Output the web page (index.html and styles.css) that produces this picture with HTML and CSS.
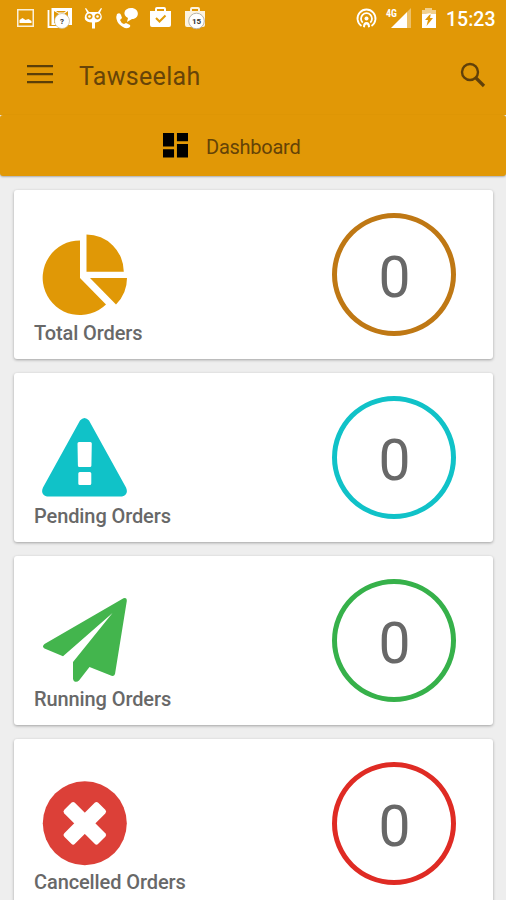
FILE: index.html
```html
<!DOCTYPE html>
<html lang="en">
<head>
<meta charset="utf-8">
<title>Tawseelah</title>
<link rel="stylesheet" href="styles.css">
</head>
<body>
<header class="header">
  <div class="status">
    <svg class="status-icons" viewBox="0 0 210 38" fill="#fff">
      <path fill-rule="evenodd" opacity=".85" d="M17 9h17v18H17zM18.500 10.500v15h14v-15z"/>
      <path d="M19.500 23v-3l3-2 3 2 3-1 3 2v2z"/>
      <path d="M48.500 10v17h13" fill="none" stroke="#fff" stroke-width="1.800"/>
      <path fill-rule="evenodd" d="M51.500 8H72v17H51.500zM54 11v12h14V11l-4 3h-5zM56 11h10l-2 1.500h-6z"/>
      <circle cx="62" cy="21" r="7.500" stroke="#c7b78e" stroke-width=".7"/>
      <text class="badge" x="62" y="24">?</text>
      <path fill-rule="evenodd" d="M86 8l3 4h9l3-4 1 .6-2 4q3 4 1 7-2 3-6 3v6h-3v-6q-5 0-7-3-1-4 2-7l-2-4zM89.500 13.500a3 3 0 1 0 .1 0zM97.500 13.500a3 3 0 1 0 .1 0z"/>
      <circle cx="89.500" cy="16.500" r="1.300"/><circle cx="97.500" cy="16.500" r="1.300"/>
      <path d="M117 14q3-2 4 1l1 3-2 2q1 3 4 4l2-1 4 2q1 2-2 3-4 1-9-4-4-5-2-10z"/>
      <path d="M131 8c9 0 9 11 1 11l-5 3 1-4c-6-3-4-10 3-10z"/>
      <path fill-rule="evenodd" d="M155 11V9q0-2 2-2h7q2 0 2 2v2h5v14q0 2-2 2h-17q-2 0-2-2V11zM157 11h7V9h-7z"/>
      <path d="M156 18l3.500 3.500 6-6" fill="none" stroke="#e19c09" stroke-width="2"/>
      <path fill-rule="evenodd" opacity=".88" d="M190 11V9q0-2 2-2h6q2 0 2 2v2h5v14q0 2-2 2h-16q-2 0-2-2V11zM192 11h6V9h-6z"/>
      <circle cx="196.500" cy="21" r="7.800" stroke="#b8b5aa" stroke-width="1"/>
      <text class="badge" x="196.500" y="24">15</text>
    </svg>
    <svg class="status-icons" viewBox="350 0 92 38" fill="#fff">
      <g fill="none" stroke="#fff" stroke-width="1.800">
        <path d="M361.500 26a9 9 0 1 1 10 0"/>
        <path d="M362.700 22.700a5.500 5.500 0 1 1 7.600 0"/>
      </g>
      <circle cx="366.500" cy="18.500" r="2"/>
      <path d="M363 27q0-5 3.500-5t3.500 5l-2 .5q0-3-1.500-3t-1.500 3z"/>
      <text class="network" x="386" y="17">4G</text>
      <path d="M391 28L407 12v16z"/>
      <path opacity=".4" d="M407 12l4-4v20h-4z"/>
      <path opacity=".55" d="M422 15v-5h3V8h7v2h4v5z"/>
      <path fill-rule="evenodd" d="M422 14h3.500l5.500-1v1h5v14h-14zM431 13l-6 7h3l-1.500 6 6.500-8h-3z"/>
    </svg>
    <span class="clock">15:23</span>
  </div>
  <div class="toolbar">
    <svg class="menu" viewBox="0 0 26 19"><path d="M0 1.200h26M0 9.200h26M0 17.200h26" stroke="#5b3f08" stroke-width="2.200"/></svg>
    <h1>Tawseelah</h1>
    <svg class="search" viewBox="0 0 26 26" fill="none" stroke="#60400a"><circle cx="10" cy="10" r="8" stroke-width="2.400"/><path d="M16 16l8 8" stroke-width="3.200"/></svg>
  </div>
</header>
<nav class="tab">
  <svg class="grid-icon" viewBox="0 0 26 26"><path d="M0 0h11.500v14H0zM14.500 0H26v8.500H14.500zM0 17h11.500v8.500H0zM14.500 11.500H26v14H14.500z"/></svg>
  <span>Dashboard</span>
</nav>
<main class="cards">
  <section class="card">
    <div class="kind">
      <svg viewBox="41 231 88 86" fill="#e09806"><path d="M80 240.500V278l26 26.500A37.300 37.300 0 1 1 80 240.500zM86.500 234.500A37.300 37.300 0 0 1 123.800 271.700H86.500zM90 278h37a37.300 37.300 0 0 1-11 26.500z"/></svg>
      <h2>Total Orders</h2>
    </div>
    <div class="count total">0</div>
  </section>
  <section class="card">
    <div class="kind">
      <svg viewBox="41 414 88 86" fill="#10c2c8"><path fill-rule="evenodd" d="M80 420.500q4.500-5 9 0l37 67q3 7-4 9H47q-7-2-4-9zM79 442q-1.500 0-1.500 1.500l.4 22q0 1.500 1.500 1.500h10.500q1.500 0 1.500-1.500l.4-22q0-1.500-1.500-1.500zM79.800 472q-1.500 0-1.500 1.500v10q0 1.500 1.500 1.500h10q1.500 0 1.500-1.500v-10q0-1.500-1.500-1.500z"/></svg>
      <h2>Pending Orders</h2>
    </div>
    <div class="count pending">0</div>
  </section>
  <section class="card">
    <div class="kind">
      <svg viewBox="41 597 88 86" fill="#43b54d"><path d="M123.500 598.300q3.500-1 3.300 2.700L115 674q-.8 2.500-3.500 1.800L89.500 667l-10.500 13.500q-2 2-4.500 1-1.500-1-1.500-3V662l39.500-49L63 656.200 44.500 648.500q-3-2 0-4.500z"/></svg>
      <h2>Running Orders</h2>
    </div>
    <div class="count running">0</div>
  </section>
  <section class="card">
    <div class="kind">
      <svg viewBox="41 780 88 86"><circle cx="84.800" cy="823.300" r="42" fill="#dc4038"/><g fill="#fff" transform="rotate(45 84.800 823.300)"><rect x="60.800" y="815.800" width="48" height="15" rx="2.500"/><rect x="77.300" y="799.300" width="15" height="48" rx="2.500"/></g></svg>
      <h2>Cancelled Orders</h2>
    </div>
    <div class="count cancelled">0</div>
  </section>
</main>
</body>
</html>
```
FILE: styles.css
```css
* { box-sizing: border-box; }
html { background: #eee; }
body { margin: 0; height: 900px; overflow: hidden; background: #eee; font-family: Roboto, sans-serif; }
svg { display: block; flex: none; }
.header { height: 115px; background: #e19806; }
.status { height: 38px; display: flex; }
.status-icons { height: 38px; }
.status-icons:first-child { width: 210px; }
.status-icons:nth-child(2) { width: 92px; margin-left: 140px; }
.badge { font: 700 8px Roboto, sans-serif; fill: #333; text-anchor: middle; }
.network { font: 700 10px "Roboto Condensed", Roboto, sans-serif; }
.clock { margin-left: 4px; color: #fff; font-size: 19.500px; font-weight: 500; line-height: 39px; white-space: nowrap; }
.toolbar { height: 76px; padding: 0 20px 0 27px; display: flex; align-items: center; }
.menu { width: 26px; height: 19px; margin-top: -3px; }
h1 { margin: 2px auto 0 26px; color: #674408; font-size: 25px; font-weight: 400; line-height: 30px; letter-spacing: .3px; }
.search { width: 26px; height: 26px; margin-top: -3px; }
.tab { height: 61px; padding: 1px 0 0 163px; display: flex; align-items: center; background: #e19806; color: #654306; border-radius: 3px; box-shadow: 0 1px 2px rgba(0,0,0,.28); font-size: 20px; letter-spacing: -.25px; }
.tab span { padding-top: 2px; }
.grid-icon { width: 25px; height: 25px; margin: -1px 18px 0 0; }
.cards { padding: 14px 13px 0 14px; display: grid; gap: 14px; }
.card { height: 169px; padding: 23px 37px 0 20px; display: flex; justify-content: space-between; background: #fff; border-radius: 3px; box-shadow: 0 1px 3px rgba(0,0,0,.32); }
.kind { padding-top: 18px; }
.kind svg { width: 88px; height: 86px; margin-left: 7px; }
h2 { margin: 4px 0 0; color: #686868; font-size: 20px; font-weight: 500; line-height: 24px; letter-spacing: -.1px; white-space: nowrap; }
.count { width: 124px; height: 123px; display: flex; justify-content: center; padding: 4px 0 0 1px; border: 5.500px solid; border-radius: 50%; color: #686868; font-size: 57px; line-height: 112px; }
.total { border-color: #bf7814; }
.pending { border-color: #10c2c8; }
.running { border-color: #36b14a; }
.cancelled { border-color: #df2b24; }
```
